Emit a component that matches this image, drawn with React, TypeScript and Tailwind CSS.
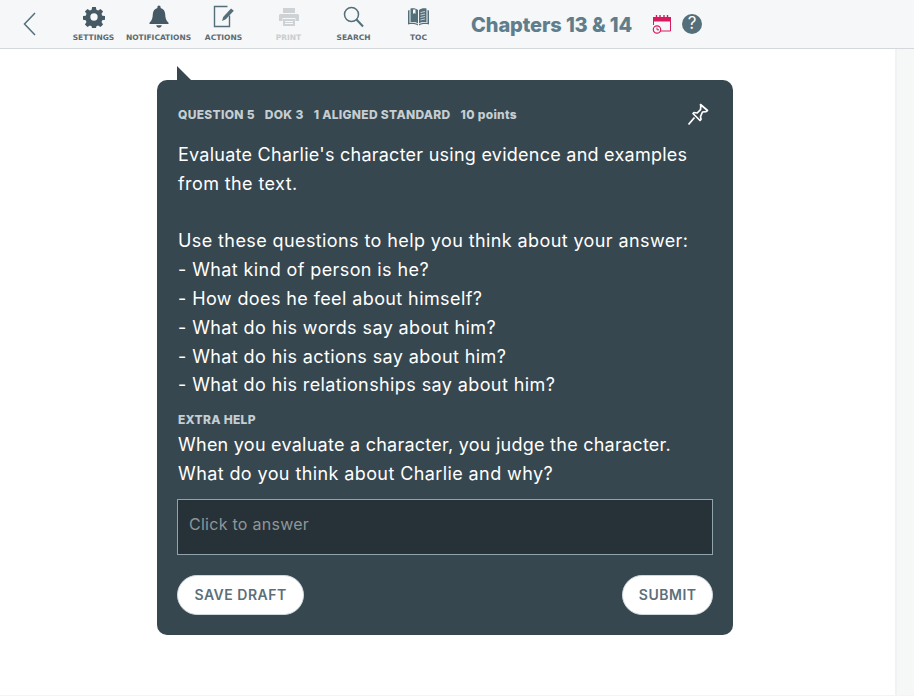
import React from "react";

function NavItem({ label, children, dim }: { label: string; children: React.ReactNode; dim?: boolean }) {
  return (
    <div className="w-[65px] h-[48px] flex flex-col items-center shrink-0">
      <div className="h-[32px] pt-[1px] flex items-center justify-center">{children}</div>
      <div
        className={`mt-[-1px] pt-[1px] text-[7.5px] leading-[12px] font-bold whitespace-nowrap ${dim ? "text-[#c9cdd0]" : "text-[#5b6a72]"}`}
        style={{ fontFamily: '"DejaVu Sans", sans-serif' }}
      >
        {label}
      </div>
    </div>
  );
}

function Gear() {
  return (
    <svg width="22" height="22" viewBox="0 0 24 24" fill="#455a64">
      <path fillRule="evenodd" d="M10 1h4l.6 3 1.900.8 2.600-1.600 2.800 2.800-1.700 2.500.8 2 3 .5v4l-3 .6-.8 1.900 1.700 2.600-2.800 2.800-2.600-1.700-1.900.8-.6 3h-4l-.6-3-1.900-.8-2.600 1.700-2.800-2.800 1.700-2.600-.8-1.900-3-.6v-4l3-.5.8-2-1.700-2.500L4.900 3.200l2.600 1.600L9.400 4zM12 8a4 4 0 100 8 4 4 0 000-8z" />
    </svg>
  );
}

function Bell() {
  return (
    <svg width="22" height="24" viewBox="0 0 22 24" fill="#455a64">
      <path d="M11 0.500c1 0 1.600.7 1.600 1.800v.6c3 .8 4.500 3.200 4.600 6.400.1 3.800.8 6.200 3.300 8.500V19H1.500v-1.200c2.500-2.300 3.200-4.700 3.300-8.500.1-3.200 1.600-5.600 4.600-6.400v-.6C9.400 1.200 10 .5 11 .5z" />
      <path d="M8.200 20.200h5.600c-.3 1.600-1.400 2.500-2.800 2.500s-2.500-.9-2.800-2.500z" />
    </svg>
  );
}

function Actions() {
  return (
    <svg width="22" height="23" viewBox="0 0 22 23" fill="none" stroke="#546e7a">
      <path d="M14.500 1.500H1.500v20h15V10.500" strokeWidth="1.400" />
      <path d="M9 16l1.200-4L18 3.500l2.800 2.200-8 8.500z" fill="#546e7a" stroke="none" />
    </svg>
  );
}

function Printer() {
  return (
    <svg width="22" height="20" viewBox="0 0 22 20" fill="#ced2d4">
      <path d="M5 1h12v5H5z" />
      <path fillRule="evenodd" d="M2.500 7h17A1.500 1.500 0 0121 8.500V14h-3.500v-3h-13v3H1V8.500A1.500 1.500 0 012.500 7z" />
      <path fillRule="evenodd" d="M5 12h12v7H5zM7 14v1h8v-1zM7 16v1h8v-1z" />
    </svg>
  );
}

function SearchIcon() {
  return (
    <svg width="21" height="22" viewBox="0 0 21 22" fill="none" stroke="#546e7a">
      <circle cx="8.500" cy="8.500" r="7" strokeWidth="1.500" />
      <path d="M13.500 13.500l6.500 7" strokeWidth="2" />
    </svg>
  );
}

function Book() {
  return (
    <svg width="21" height="20" viewBox="0 0 21 20" fill="#546e7a">
      <path d="M0 3.500l1.500-.5v13c3-.6 6-.4 8.500 1.300V18.500c-3-1.600-6.500-1.700-10-1z" />
      <path d="M21 3.500L19.500 3v13c-3-.6-6-.4-8.500 1.300v1.200c3-1.600 6.500-1.700 10-1z" />
      <path d="M2.500 1.500C5 1 8 1.200 10 3v13.500C8 15 5 14.700 2.500 15.200z" />
      <path d="M18.500 1.500C16 1 13 1.200 11 3v13.500c2-1.500 5-1.800 7.500-1.300z" />
      <path d="M12.500 5.500l4.500-1M12.500 8l4.500-1M12.500 10.500l4.500-1M12.500 13l4.500-1" stroke="#f5f7f8" strokeWidth=".7" />
      <path d="M5 2.500h2.500V7L6.200 6 5 7z" fill="#f5f7f8" />
    </svg>
  );
}

function Calendar() {
  return (
    <svg width="20" height="20" viewBox="0 0 20 20" fill="none" stroke="#d81b60">
      <path d="M8 17h10.500V5" strokeWidth="1" />
      <path d="M1.500 11V5" strokeWidth="1" />
      <path d="M1 3h18v4.500H1z" fill="#d81b60" stroke="none" />
      <path d="M4.500 1v3M8 1v3M12 1v3M15.500 1v3" strokeWidth="1.400" />
      <circle cx="5" cy="15.500" r="3.700" strokeWidth="1.200" />
      <path d="M5 13.500v2.300h2" strokeWidth="1" />
    </svg>
  );
}

function Pin() {
  return (
    <svg width="22" height="23" viewBox="0 0 22 23" fill="none" stroke="#ffffff" strokeWidth="1.700" strokeLinejoin="round">
      <path d="M13.500 1.500l7 6-1.500 1.200-3.500.3-2 4.500.5 3-1 1-7-7 1-1 3.200.5 3.300-3.300.3-3.500z" />
      <path d="M7.500 14.500l-6 7" strokeWidth="1.800" />
    </svg>
  );
}

export default function App() {
  const body = "text-[18px] leading-[28.8px] tracking-[0.4px]";
  const tight = "tracking-[0.25px]";
  const meta = "text-[12px] font-extrabold tracking-[0.3px] text-[#c5ced2]";
  const btn = "h-[40px] rounded-full bg-white border border-[#cfd8dc] text-[#5b6f7a] text-[14px] font-semibold tracking-[0.5px]";
  return (
    <div className="w-[914px] h-[696px] overflow-hidden bg-white flex flex-col" style={{ fontFamily: 'Inter, sans-serif' }}>
      <header className="h-[49px] shrink-0 bg-[#f5f7f8] border-b border-[#d5d8da] flex items-center">
        <svg width="16" height="26" viewBox="0 0 16 26" fill="none" stroke="#546e7a" strokeWidth="1.500" className="ml-[22px] mr-[23px] shrink-0">
          <path d="M13 2L2.500 13 13 24" />
        </svg>
        <NavItem label="SETTINGS"><Gear /></NavItem>
        <NavItem label="NOTIFICATIONS"><Bell /></NavItem>
        <NavItem label="ACTIONS"><Actions /></NavItem>
        <NavItem label="PRINT" dim><Printer /></NavItem>
        <NavItem label="SEARCH"><SearchIcon /></NavItem>
        <NavItem label="TOC"><Book /></NavItem>
        <div className="ml-[20px] pt-[2px] w-[161px] text-[20px] font-extrabold tracking-[-0.1px] text-[#607d8b] whitespace-nowrap">Chapters 13 &amp; 14</div>
        <div className="ml-[20px] shrink-0"><Calendar /></div>
        <div className="ml-[10px] w-[20px] h-[20px] rounded-full bg-[#546e7a] text-white text-[17px] flex items-center justify-center">?</div>
      </header>

      <div className="flex-1 flex min-h-0 border-b border-[#f3f4f5]">
        <main className="w-[895px] shrink-0 pt-[31px] pl-[157px]">
          <div className="relative w-[576px] h-[555px] bg-[#37474f] rounded-[10px] px-[21px] pt-[26px] text-white">
            <div className="absolute left-[20px] top-[-14px] w-0 h-0 border-t-[14px] border-t-transparent border-l-[14px] border-l-[#37474f]" />
            <div className="flex items-center justify-between h-[18px]">
              <div className={`flex gap-[10px] whitespace-nowrap ${meta}`}>
                <span>QUESTION 5</span>
                <span>DOK 3</span>
                <span>1 ALIGNED STANDARD</span>
                <span>10 points</span>
              </div>
              <div className="mr-[3px] -mt-[2px]"><Pin /></div>
            </div>
            <div className={`mt-[17px] ${body}`}>
              <p className={tight}>Evaluate Charlie's character using evidence and examples</p>
              <p>from the text.</p>
              <p>&nbsp;</p>
              <p>Use these questions to help you think about your answer:</p>
              <p>- What kind of person is he?</p>
              <p>- How does he feel about himself?</p>
              <p>- What do his words say about him?</p>
              <p>- What do his actions say about him?</p>
              <p>- What do his relationships say about him?</p>
            </div>
            <div className={`mt-[12px] leading-[16px] ${meta}`}>EXTRA HELP</div>
            <div className={`mt-[3px] ${body}`}>
              <p className={tight}>When you evaluate a character, you judge the character.</p>
              <p>What do you think about Charlie and why?</p>
            </div>
            <div className="mt-[10px] h-[56px] w-[536px] -ml-px bg-[#263238] border border-[#90a4ae] px-[11px] pt-[10px] text-[16px] tracking-[0.27px] leading-[28px] text-[#8f9698]">
              Click to answer
            </div>
            <div className="mt-[20px] w-[536px] -ml-px flex justify-between">
              <button className={`px-[16.5px] ${btn}`}>SAVE DRAFT</button>
              <button className={`px-[15.5px] ${btn}`}>SUBMIT</button>
            </div>
          </div>
        </main>
        <aside className="flex-1 bg-[#f6f8f8] border-l-2 border-[#f0f2f3]" />
      </div>
    </div>
  );
}
